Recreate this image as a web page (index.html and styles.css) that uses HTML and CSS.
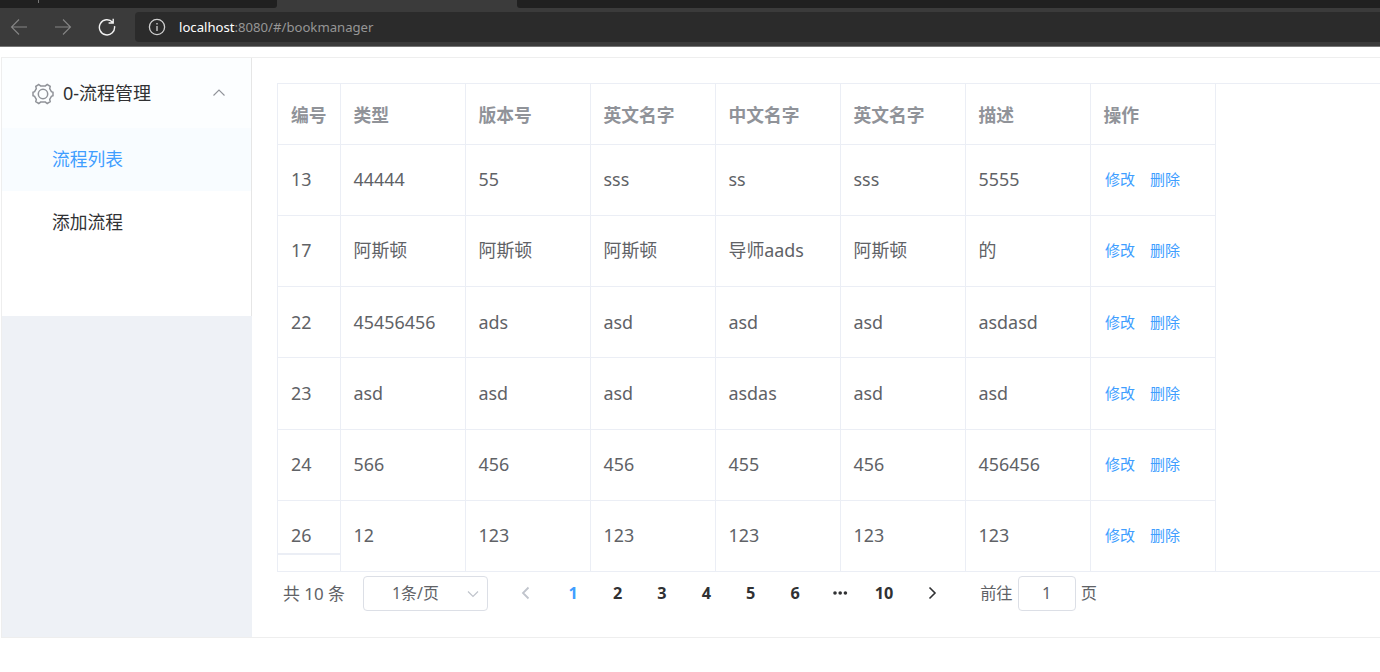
FILE: index.html
```html
<!DOCTYPE html>
<html lang="zh-CN">
<head>
    <meta charset="UTF-8">
    <meta name="viewport" content="width=device-width, initial-scale=1.0">
    <title>bookmanager</title>
    <link rel="stylesheet" href="styles.css">
</head>
<body>
    <div class="browser">
        <div class="tabs">
            <div class="tab tab-left"><span></span></div>
            <div class="tab-active"></div>
            <div class="tab tab-right"></div>
        </div>
        <div class="toolbar">
            <svg class="nav-icon" width="18" height="18" viewBox="0 0 18 18"><path d="M17 9H1.5M9 1.5L1.5 9L9 16.5"/></svg>
            <svg class="nav-icon" width="18" height="18" viewBox="0 0 18 18"><path d="M1 9h15.5M9 1.5L16.5 9L9 16.5"/></svg>
            <svg class="nav-icon reload" width="18" height="18" viewBox="0 0 18 18"><path d="M16.5 8.2A7.6 7.6 0 1 1 14.6 4.2M15.2 0.8V5H10.6"/></svg>
            <div class="address">
                <svg width="18" height="18" viewBox="0 0 18 18"><circle cx="9" cy="9" r="7.6"/><path d="M9 8v5M9 5v1.6"/></svg>
                <div class="url"><b>localhost</b>:8080/#/bookmanager</div>
            </div>
        </div>
    </div>

    <div class="container">
        <div class="aside">
            <div class="menu">
                <div class="submenu-title">
                    <svg class="gear" width="22" height="22" viewBox="0 0 22 22"><path d="M6.8 1.5L8.6 2.9H13.4L15.2 1.5L18.2 3.3L17.7 5.6L19.4 8.6L21 9.2V12.8L19.4 13.4L17.7 16.4L18.2 18.7L15.2 20.5L13.4 19.1H8.6L6.8 20.5L3.8 18.7L4.3 16.4L2.6 13.4L1 12.8V9.2L2.6 8.6L4.3 5.6L3.8 3.3Z"/><circle cx="11" cy="11" r="4.7"/></svg>
                    <span>0-流程管理</span>
                    <svg class="arrow" width="14" height="14" viewBox="0 0 14 14"><path d="M1.5 9.5L7 4L12.5 9.5"/></svg>
                </div>
                <div class="menu-item active">流程列表</div>
                <div class="menu-item">添加流程</div>
            </div>
        </div>

        <div class="main">
            <div class="table-box">
                <table>
                    <thead>
                        <tr><th class="col-id">编号</th><th>类型</th><th>版本号</th><th>英文名字</th><th>中文名字</th><th>英文名字</th><th>描述</th><th>操作</th></tr>
                    </thead>
                    <tbody>
                        <tr><td>13</td><td>44444</td><td>55</td><td>sss</td><td>ss</td><td>sss</td><td>5555</td><td class="action"><a>修改</a><a>删除</a></td></tr>
                        <tr><td>17</td><td>阿斯顿</td><td>阿斯顿</td><td>阿斯顿</td><td>导师aads</td><td>阿斯顿</td><td>的</td><td class="action"><a>修改</a><a>删除</a></td></tr>
                        <tr class="low"><td>22</td><td>45456456</td><td>ads</td><td>asd</td><td>asd</td><td>asd</td><td>asdasd</td><td class="action"><a>修改</a><a>删除</a></td></tr>
                        <tr class="tall"><td>23</td><td>asd</td><td>asd</td><td>asd</td><td>asdas</td><td>asd</td><td>asd</td><td class="action"><a>修改</a><a>删除</a></td></tr>
                        <tr><td>24</td><td>566</td><td>456</td><td>456</td><td>455</td><td>456</td><td>456456</td><td class="action"><a>修改</a><a>删除</a></td></tr>
                        <tr><td>26</td><td>12</td><td>123</td><td>123</td><td>123</td><td>123</td><td>123</td><td class="action"><a>修改</a><a>删除</a></td></tr>
                    </tbody>
                </table>
                <div class="fixed-line"></div>
            </div>

            <div class="pagination">
                <span class="total">共 10 条</span>
                <div class="sizes">
                    <span>1条/页</span>
                    <svg width="14" height="14" viewBox="0 0 14 14"><path d="M2 4.5L7 9.5L12 4.5"/></svg>
                </div>
                <svg class="btn-prev" width="14" height="14" viewBox="0 0 14 14"><path d="M9.5 1.5L4 7L9.5 12.5"/></svg>
                <ul class="pager">
                    <li class="active">1</li>
                    <li>2</li>
                    <li>3</li>
                    <li>4</li>
                    <li>5</li>
                    <li>6</li>
                    <li><svg width="16" height="6" viewBox="0 0 16 6"><circle cx="3" cy="3" r="1.8"/><circle cx="8.2" cy="3" r="1.8"/><circle cx="13.4" cy="3" r="1.8"/></svg></li>
                    <li>10</li>
                </ul>
                <svg class="btn-next" width="14" height="14" viewBox="0 0 14 14"><path d="M4.5 1.5L10 7L4.5 12.5"/></svg>
                <div class="jump">前往<span class="jump-input">1</span>页</div>
            </div>
        </div>
    </div>
</body>
</html>
```
FILE: styles.css
```css
* {
    box-sizing: border-box;
}
body {
    margin: 0;
    height: 672px;
    overflow: hidden;
    background: #fff;
    font-family: "Noto Sans", "Noto Sans CJK SC", sans-serif;
    color: #606266;
}
svg {
    display: block;
    flex: none;
    fill: none;
}

/* browser bar */
.browser {
    height: 47px;
    background: #3b3b3b;
    border-bottom: 1px solid #767676;
}
.tabs {
    display: flex;
    height: 8px;
}
.tab {
    background: #202020;
}
.tab-left {
    width: 277px;
    padding-left: 38px;
    border-bottom-right-radius: 3px;
}
.tab-left span {
    display: block;
    width: 1px;
    height: 3px;
    background: #777;
}
.tab-active {
    width: 240px;
}
.tab-right {
    flex: 1;
    border-bottom-left-radius: 3px;
}
.toolbar {
    display: flex;
    align-items: center;
    height: 38px;
    padding-left: 10px;
}
.nav-icon {
    margin-right: 26px;
    stroke: #858585;
    stroke-width: 1.1;
}
.reload {
    margin-right: 19px;
    stroke: #f2f2f2;
    stroke-width: 1.4;
}
.address {
    display: flex;
    align-items: center;
    flex: 1;
    height: 30px;
    padding-left: 13px;
    background: #2b2b2b;
    border-radius: 4px 0 0 4px;
}
.address svg {
    stroke: #d0d0d0;
    stroke-width: 1.3;
}
.url {
    margin-left: 13px;
    font-size: 13.15px;
    color: #969696;
}
.url b {
    font-weight: 400;
    color: #fff;
}

/* layout */
.container {
    display: flex;
    height: 581px;
    margin: 10px 0 0 1px;
    border: 1px solid #eee;
    border-right: none;
}
.aside {
    width: 250px;
    background: #eef1f6;
}
.menu {
    height: 258px;
    background: #fff;
    border-right: 1px solid #e6e6e6;
    font-size: 17.75px;
    color: #303133;
}
.submenu-title {
    display: flex;
    align-items: center;
    height: 70px;
    padding: 0 25px 0 30px;
    background: #fcfeff;
}
.submenu-title span {
    flex: 1;
    margin-left: 9px;
    padding-bottom: 2px;
    font-size: 18px;
}
.gear {
    margin-top: 2px;
    stroke: #909399;
    stroke-width: 1.5;
}
.arrow {
    stroke: #909399;
    stroke-width: 1.1;
}
.menu-item {
    height: 63px;
    padding-left: 50px;
    line-height: 62px;
}
.menu-item.active {
    background: #f8fcff;
    color: #409eff;
}
.main {
    flex: 1;
    padding: 25px 0 0 25px;
}

/* table */
.table-box {
    position: relative;
    height: 489px;
    border: 1px solid #ebeef5;
    border-right: none;
}
table {
    width: 938px;
    table-layout: fixed;
    border-spacing: 0;
}
th, td {
    height: 71px;
    padding: 0 0 2px 12.5px;
    border-right: 1px solid #ebeef5;
    border-bottom: 1px solid #ebeef5;
    text-align: left;
    font-size: 17.9px;
    line-height: 28px;
    white-space: nowrap;
}
th {
    height: 61px;
    padding-top: 2px;
    padding-bottom: 0;
    font-size: 17.75px;
    color: #909399;
}
th:first-child, td:first-child {
    padding-left: 13px;
}
.low td {
    padding-bottom: 0;
}
.tall td {
    height: 72px;
}
tbody tr:last-child td {
    padding-bottom: 3px;
    border-bottom: none;
}
.col-id {
    width: 63px;
}
.action {
    padding-left: 14px;
    font-size: 15px;
}
.action a {
    margin-right: 15px;
    color: #409eff;
}
/* bottom edge of the fixed first column */
.fixed-line {
    position: absolute;
    left: 0;
    bottom: 16px;
    width: 62px;
    height: 2px;
    background: #ebeef5;
}

/* pagination */
.pagination {
    display: flex;
    align-items: center;
    height: 35px;
    margin-top: 4px;
    padding-left: 6px;
    font-size: 16.25px;
}
.total {
    width: 80px;
    padding-bottom: 3px;
    font-size: 16.9px;
}
.sizes {
    display: flex;
    align-items: center;
    justify-content: space-between;
    width: 125px;
    height: 35px;
    padding: 0 7px 0 28px;
    border: 1px solid #dcdfe6;
    border-radius: 4px;
}
.sizes span {
    padding-bottom: 3px;
    font-size: 15.9px;
}
.sizes svg {
    stroke: #c0c4cc;
    stroke-width: 1.2;
}
.btn-prev {
    margin: 0 18px 2px 31px;
    stroke: #c0c4cc;
    stroke-width: 1.8;
}
.btn-next {
    margin: 0 0 2px 19px;
    stroke: #303133;
    stroke-width: 1.6;
}
.pager {
    display: flex;
    margin: 0;
    padding: 0 0 2px;
    list-style: none;
    font-weight: 700;
    color: #303133;
}
.pager li {
    display: flex;
    align-items: center;
    justify-content: center;
    width: 44.4px;
}
.pager svg {
    fill: #303133;
}
.pager .active {
    color: #409eff;
}
.jump {
    display: flex;
    align-items: center;
    margin-left: 41px;
    padding-bottom: 1px;
    line-height: 32px;
}
.jump-input {
    width: 58px;
    height: 35px;
    margin: 1px 5px 0;
    border: 1px solid #dcdfe6;
    border-radius: 4px;
    text-align: center;
}
```
